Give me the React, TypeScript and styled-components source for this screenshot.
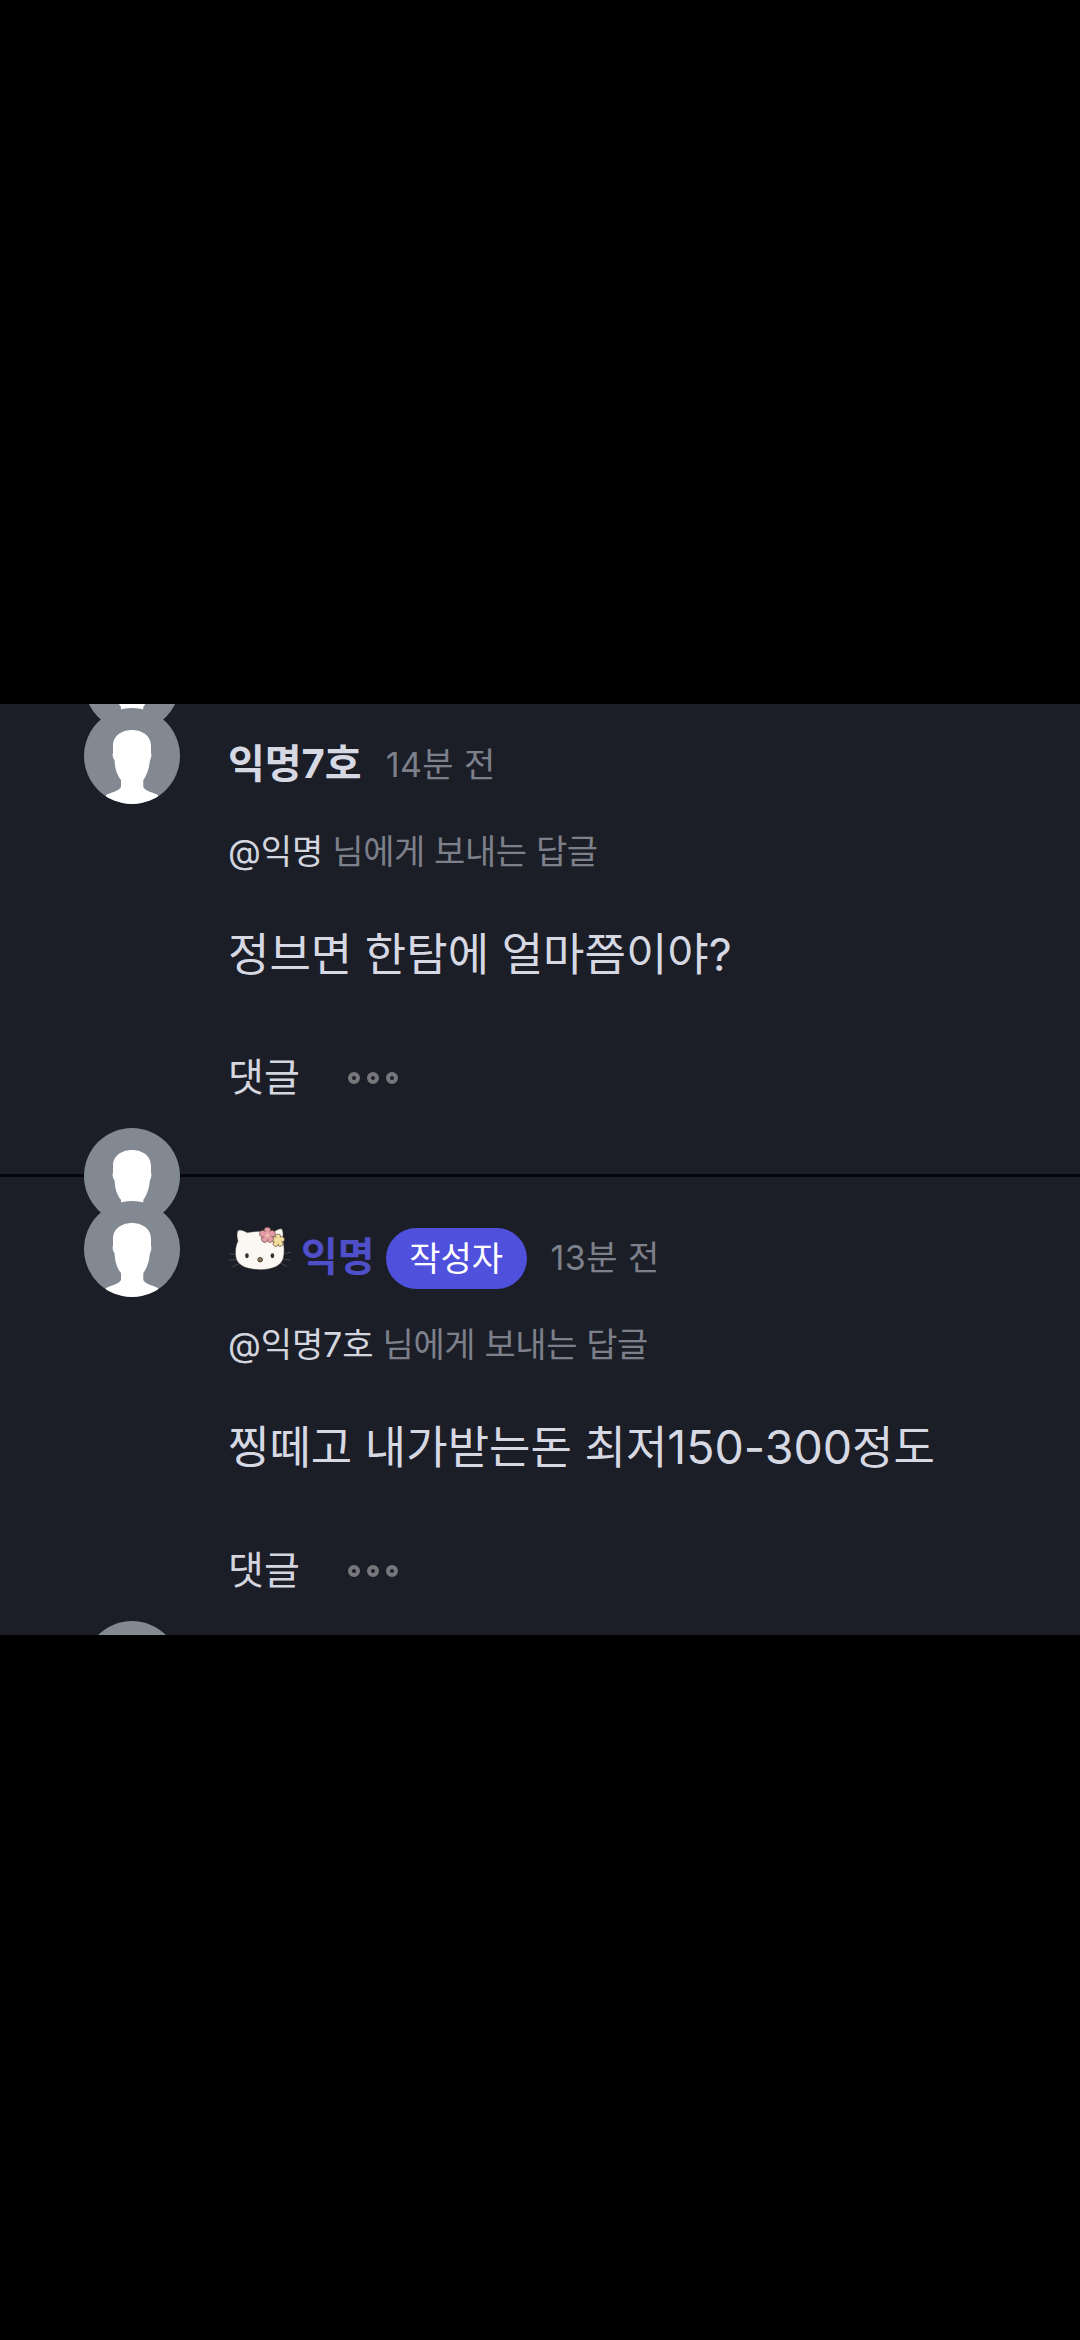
import React from "react";
import styled, { createGlobalStyle } from "styled-components";

const GlobalStyle = createGlobalStyle`
  * { box-sizing: border-box; }
  body {
    margin: 0;
    background: #000;
    font-family: Inter, "Noto Sans CJK KR", sans-serif;
  }
`;

const Screen = styled.div`
  height: 2340px;
  padding-top: 704px;
  background: #000;
`;

const Panel = styled.main`
  height: 931px;
  overflow: hidden;
  background: #1b1e27;
`;

const Thread = styled.div`
  margin-top: -23px;
`;

const Comment = styled.article`
  display: flex;
  height: 493px;
  padding-left: 84px;
  border-top: 3px solid #05060c;
`;

const AvatarStack = styled.div`
  display: flex;
  flex-direction: column;
  width: 96px;
  flex: none;
  margin-top: -49px;
`;

const AvatarSvg = styled.svg<{ $overlap?: boolean }>`
  display: block;
  width: 96px;
  height: 96px;
  flex: none;
  margin-top: ${(p) => (p.$overlap ? "-23px" : "0")};
`;

const Content = styled.div`
  flex: 1;
  padding: 51px 0 0 48px;
  white-space: nowrap;
`;

const Header = styled.header`
  display: flex;
  align-items: center;
  height: 61px;
`;

const Name = styled.strong<{ $author?: boolean }>`
  margin-bottom: 4px;
  font-size: 40px;
  line-height: 56px;
  font-weight: 700;
  color: ${(p) => (p.$author ? "#4f4fc9" : "#d6d8e3")};
`;

const Badge = styled.span`
  display: flex;
  align-items: center;
  justify-content: center;
  width: 141px;
  height: 61px;
  margin-left: 11px;
  border-radius: 31px;
  background: #4f50dc;
  color: #fff;
  font-size: 34px;
  line-height: 61px;
`;

const Time = styled.time`
  margin: 0 0 2px 24px;
  color: #7d808a;
  font-size: 34px;
  line-height: 56px;
  letter-spacing: 0.4px;
`;

const ReplyTo = styled.p`
  margin: 36px 0 0;
  color: #7d808a;
  font-size: 34px;
  line-height: 40px;
  letter-spacing: -0.4px;
`;

const Mention = styled.span`
  color: #d3d5df;
  letter-spacing: -0.1px;
`;

const Body = styled.p`
  margin: 56px 0 0;
  color: #d6d8e3;
  font-size: 45px;
  line-height: 54px;
`;

const Figures = styled.span`
  font-size: 46.5px;
  line-height: 1;
`;

const Actions = styled.footer`
  display: flex;
  align-items: center;
  gap: 48px;
  height: 46px;
  margin-top: 73px;
`;

const ReplyButton = styled.button`
  padding: 0 0 3px;
  border: 0;
  background: none;
  color: #d3d5df;
  font: inherit;
  font-size: 39px;
  line-height: 46px;
`;

const MoreButton = styled.button`
  display: flex;
  gap: 7px;
  padding: 0;
  border: 0;
  background: none;
`;

const Dot = styled.i`
  width: 12px;
  height: 12px;
  border: 4px solid #77777b;
  border-radius: 50%;
`;

const KittySvg = styled.svg`
  display: block;
  width: 67px;
  height: 48px;
  margin: -21px 7px 0 -1px;
`;

const Avatar = ({ overlap }: { overlap?: boolean }) => (
  <AvatarSvg viewBox="0 0 96 96" $overlap={overlap}>
    <defs>
      <clipPath id="disc">
        <circle cx="48" cy="48" r="48" />
      </clipPath>
    </defs>
    <g clipPath="url(#disc)">
      <rect width="96" height="96" fill="#828992" />
      <path
        fill="#fff"
        d="M48 22C56 22 67 26 67 38V45C68 46 67 51 66 52C65 61 63 67 59.300 72V79C61 83 68 84 74 87V96H22V87C28 84 35 83 37 79V72C33 67 31 61 30.500 52C29 51 28 46 29 45V38C29 26 40 22 48 22Z"
      />
    </g>
  </AvatarSvg>
);

const Flower = ({ x, y, r, fill }: { x: number; y: number; r: number; fill: string }) => (
  <g transform={`translate(${x} ${y})`}>
    {[0, 72, 144, 216, 288].map((a) => (
      <circle key={a} cy={-r} r={r * 0.72} transform={`rotate(${a})`} fill={fill} stroke="#6b4c42" strokeWidth="2" />
    ))}
    <circle r={r * 0.85} fill={fill} />
    <circle r={r * 0.3} fill="#f4cfae" />
  </g>
);

const Kitty = () => (
  <KittySvg viewBox="500 340 200 145">
    <g stroke="#4a4743" strokeWidth="3" strokeLinecap="round">
      <path d="M507 430L534 433M505 449L532 447M516 469L538 459M665 432L691 425M667 446L690 449M661 458L679 468" />
    </g>
    <path
      fill="#fbf8f3"
      stroke="#383431"
      strokeWidth="1.500"
      d="M532 360C536 356 548 359 560 366C584 361 620 361 640 365C648 358 660 352 665 356C670 364 668 380 667 389C672 403 673 425 669 443C663 468 633 478 600 478C563 478 532 468 526 443C522 423 525 405 532 391C528 380 528 366 532 360Z"
    />
    <ellipse cx="559" cy="436" rx="5.500" ry="7.500" fill="#302e30" />
    <ellipse cx="636" cy="436" rx="5.500" ry="7.500" fill="#302e30" />
    <ellipse cx="599" cy="448" rx="7" ry="6.500" fill="#8f7d5a" stroke="#3c3529" strokeWidth="3" />
    <Flower x={653} y={390} r={11.5} fill="#f1e09c" />
    <Flower x={621} y={374} r={14} fill="#e39ba5" />
  </KittySvg>
);

type CommentData = { name: string; author?: boolean; time: string; to: string; text: string };

const comments: CommentData[] = [
  { name: "익명7호", time: "14분 전", to: "@익명", text: "정브면 한탐에 얼마쯤이야?" },
  { name: "익명", author: true, time: "13분 전", to: "@익명7호", text: "찡떼고 내가받는돈 최저150-300정도" },
];

// Numerals are set slightly larger than the surrounding Hangul.
const withFigures = (text: string) =>
  text.split(/([\d-]+)/).map((part, i) => (i % 2 ? <Figures key={i}>{part}</Figures> : part));

const Avatars = () => (
  <AvatarStack>
    <Avatar />
    <Avatar overlap />
  </AvatarStack>
);

export default function App() {
  return (
    <>
      <GlobalStyle />
      <Screen>
        <Panel>
          <Thread>
            {comments.map((c) => (
              <Comment key={c.time}>
                <Avatars />
                <Content>
                  <Header>
                    {c.author && <Kitty />}
                    <Name $author={c.author}>{c.name}</Name>
                    {c.author && <Badge>작성자</Badge>}
                    <Time>{c.time}</Time>
                  </Header>
                  <ReplyTo>
                    <Mention>{c.to}</Mention> 님에게 보내는 답글
                  </ReplyTo>
                  <Body>{withFigures(c.text)}</Body>
                  <Actions>
                    <ReplyButton>댓글</ReplyButton>
                    <MoreButton aria-label="더보기">
                      <Dot />
                      <Dot />
                      <Dot />
                    </MoreButton>
                  </Actions>
                </Content>
              </Comment>
            ))}
            <Comment>
              <Avatars />
            </Comment>
          </Thread>
        </Panel>
      </Screen>
    </>
  );
}
